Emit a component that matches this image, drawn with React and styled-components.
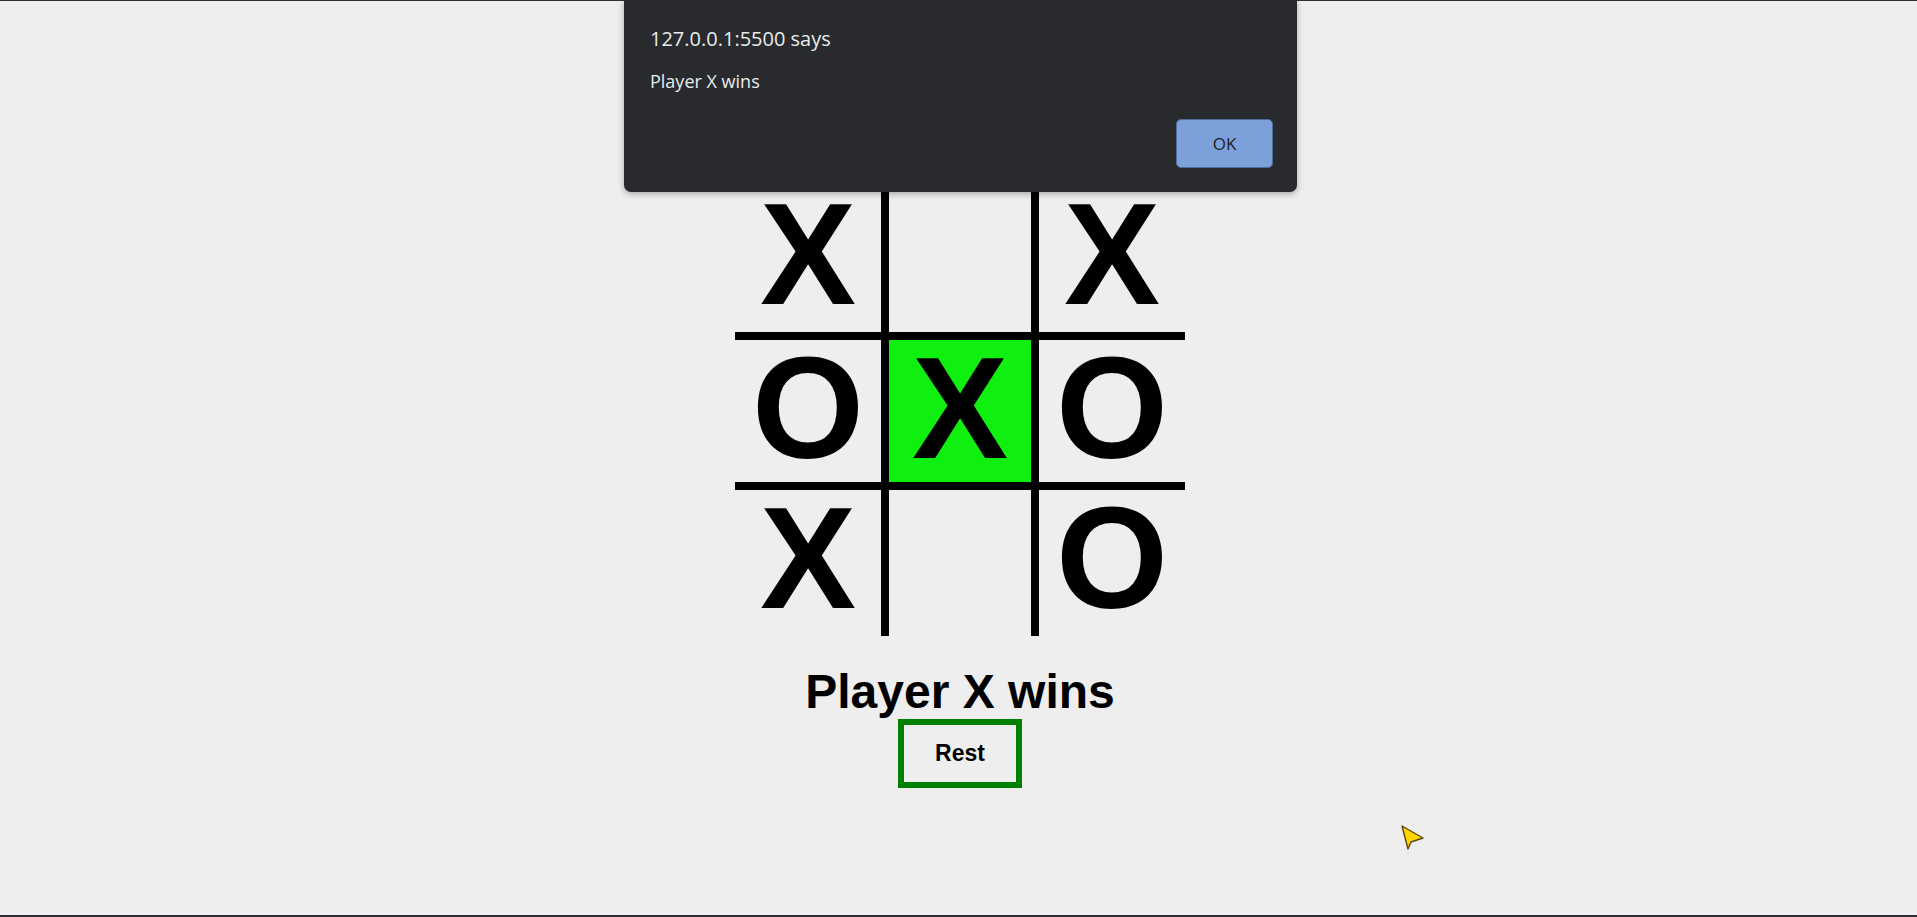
import styled, { createGlobalStyle } from "styled-components";

const GlobalStyle = createGlobalStyle`
  html, body {
    margin: 0;
    padding: 0;
    background: #eeeeee;
    font-family: "Liberation Sans", Arial, sans-serif;
  }
`;

const board = ["X", "", "X", "O", "X", "O", "X", "", "O"];
const winLine = [4];

export default function App() {
  return (
    <>
      <GlobalStyle />
      <Page>
        <Board>
          {board.map((v, i) => (
            <Cell
              key={i}
              $row={Math.floor(i / 3)}
              $col={i % 3}
              $win={winLine.includes(i)}
            >
              {v}
            </Cell>
          ))}
        </Board>
        <Status>Player X wins</Status>
        <ResetButton>Rest</ResetButton>
      </Page>

      {/* alert() del navegador encima del tablero */}
      <Alert>
        <AlertTitle>127.0.0.1:5500 says</AlertTitle>
        <AlertMessage>Player X wins</AlertMessage>
        <AlertActions>
          <OkButton>OK</OkButton>
        </AlertActions>
      </Alert>

      <Cursor width="30" height="32" viewBox="0 0 30 32">
        <path
          d="M4 4 L10 27 L13 20 L25 16 Z"
          fill="#ffd400"
          stroke="#5a4a10"
          strokeWidth="1.4"
          strokeLinejoin="round"
        />
      </Cursor>
    </>
  );
}

const Page = styled.div`
  min-height: 100vh;
  box-sizing: border-box;
  border-top: 1px solid #2e3033;
  border-bottom: 2px solid #2e3033;
  display: flex;
  flex-direction: column;
  align-items: center;
  padding-top: 185px;
  padding-left: 3px;
`;

const Board = styled.div`
  display: grid;
  grid-template-columns: repeat(3, 150px);
  grid-template-rows: repeat(3, 150px);
`;

const Cell = styled.div`
  box-sizing: border-box;
  border: 4px solid #000;
  border-top-width: ${(p) => (p.$row === 0 ? 0 : 4)}px;
  border-bottom-width: ${(p) => (p.$row === 2 ? 0 : 4)}px;
  border-left-width: ${(p) => (p.$col === 0 ? 0 : 4)}px;
  border-right-width: ${(p) => (p.$col === 2 ? 0 : 4)}px;
  background: ${(p) => (p.$win ? "#10f010" : "transparent")};
  display: flex;
  justify-content: center;
  align-items: flex-start;
  padding-top: 1px;
  font-size: 144px;
  line-height: 136px;
  font-weight: bold;
  color: #000;
`;

const Status = styled.h1`
  margin: 28px 0 0;
  font-size: 48px;
  font-weight: bold;
  line-height: normal;
  color: #000;
`;

const ResetButton = styled.button`
  box-sizing: border-box;
  width: 124px;
  height: 69px;
  border: 6px solid #008000;
  background: transparent;
  font-family: "Liberation Sans", Arial, sans-serif;
  font-size: 23px;
  font-weight: bold;
  color: #000;
  padding: 0;
  cursor: pointer;
`;

const Alert = styled.div`
  position: absolute;
  top: 0;
  left: 624px;
  width: 673px;
  height: 192px;
  box-sizing: border-box;
  background: #292a2d;
  border-radius: 0 0 7px 7px;
  box-shadow: 0 2px 6px rgba(0, 0, 0, 0.3);
  padding: 25px 24px 24px 26px;
  display: flex;
  flex-direction: column;
  font-family: "Open Sans", "Noto Sans", sans-serif;
  color: #e8eaed;
`;

const AlertTitle = styled.div`
  font-size: 20px;
  line-height: 27px;
`;

const AlertMessage = styled.div`
  margin-top: 17px;
  font-size: 18px;
  line-height: 25px;
`;

const AlertActions = styled.div`
  margin-top: auto;
  display: flex;
  justify-content: flex-end;
`;

const OkButton = styled.button`
  width: 97px;
  height: 49px;
  box-sizing: border-box;
  border: 1px solid #4f6e9e;
  border-radius: 5px;
  background: #7ba0da;
  color: #202124;
  font-family: "Open Sans", "Noto Sans", sans-serif;
  font-size: 17px;
  padding: 0;
`;

const Cursor = styled.svg`
  position: absolute;
  left: 1398px;
  top: 822px;
`;
